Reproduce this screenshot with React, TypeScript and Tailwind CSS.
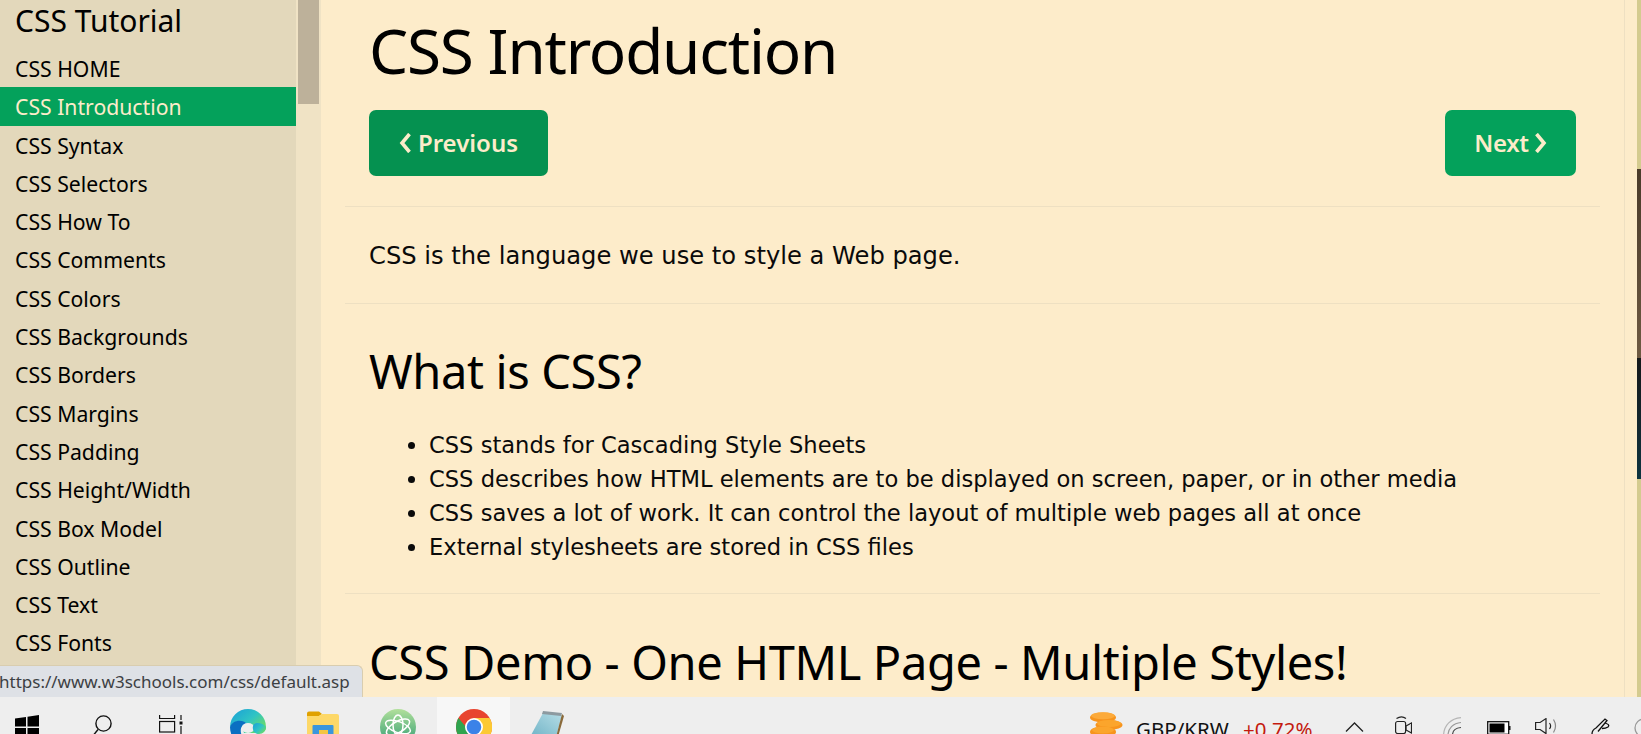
const lessons = [
  'CSS HOME',
  'CSS Introduction',
  'CSS Syntax',
  'CSS Selectors',
  'CSS How To',
  'CSS Comments',
  'CSS Colors',
  'CSS Backgrounds',
  'CSS Borders',
  'CSS Margins',
  'CSS Padding',
  'CSS Height/Width',
  'CSS Box Model',
  'CSS Outline',
  'CSS Text',
  'CSS Fonts',
  'CSS Icons',
];

const bullets = [
  'CSS stands for Cascading Style Sheets',
  'CSS describes how HTML elements are to be displayed on screen, paper, or in other media',
  'CSS saves a lot of work. It can control the layout of multiple web pages all at once',
  'External stylesheets are stored in CSS files',
];

function Sidebar() {
  return (
    <div className="flex w-[321px] shrink-0 overflow-hidden bg-[#f0e3c5]">
      <div className="w-[296px] shrink-0 bg-[#e3d8bb] text-black">
        <h2 className="h-[49px] pl-[15px] text-[30px] leading-[41px]">CSS Tutorial</h2>
        {lessons.map((name) => (
          <div
            key={name}
            className={`h-[38.3px] pl-[15px] pt-[1px] text-[21.2px] leading-[38px] ${
              name === 'CSS Introduction' ? 'bg-[#04a15b] text-[#fcecca]' : ''
            }`}
          >
            {name}
          </div>
        ))}
      </div>
      <div className="ml-[2px] h-[104px] w-[21px] bg-[#bdb19a]" />
    </div>
  );
}

function Rule() {
  return <hr className="border-0 border-t border-[#eee0c2]" />;
}

function Chevron({ left }: { left?: boolean }) {
  return (
    <svg width="13" height="20" viewBox="0 0 13 20" fill="none" stroke="#fcecca" strokeWidth="3.6">
      <path d={left ? 'M10.500 1 3 10l7.500 9' : 'M2.500 1 10 10l-7.500 9'} />
    </svg>
  );
}

function Content() {
  return (
    <div className="flex min-w-0 flex-1 overflow-hidden bg-[#fdecca]">
      <div className="w-[1304px] shrink-0 border-r border-[#eee0c2] px-[24px]">
        <div className="px-[24px]">
          <h1 className="pt-[8px] text-[62px] leading-[85px] tracking-[-1.2px] text-black">CSS Introduction</h1>
          <div className="mt-[17px] flex justify-between">
            <button className="flex h-[66px] w-[179px] items-center justify-center gap-[6px] rounded-[7px] bg-[#059150] text-[24px] font-semibold text-[#fcecca]">
              <Chevron left />
              Previous
            </button>
            <button className="flex h-[66px] w-[131px] items-center justify-center gap-[5px] rounded-[7px] bg-[#04a15b] text-[24px] font-semibold tracking-[-0.3px] text-[#fcecca]">
              Next
              <Chevron />
            </button>
          </div>
        </div>
        <div className="mt-[30px]">
          <Rule />
        </div>
        <p className="px-[24px] pt-[36px] pb-[33px] font-['DejaVu_Sans'] text-[24.2px] leading-[27px] text-[#0a0a0a]">
          CSS is the language we use to style a Web page.
        </p>
        <Rule />
        <h2 className="px-[24px] pt-[35px] text-[47px] leading-[64px] tracking-[-0.37px] text-black">What is CSS?</h2>
        <ul className="mt-[25px] list-disc pl-[84px] font-['DejaVu_Sans'] text-[22.6px] leading-[34px] text-[#0a0a0a]">
          {bullets.map((item) => (
            <li key={item}>{item}</li>
          ))}
        </ul>
        <div className="mt-[29px]">
          <Rule />
        </div>
        <h2 className="whitespace-nowrap px-[24px] pt-[36px] text-[47px] leading-[64px] tracking-[-0.37px] text-black">
          CSS Demo - One HTML Page - Multiple Styles!
        </h2>
      </div>
      <div className="flex-1" />
      <div className="flex w-[4px] shrink-0 flex-col bg-[#d4cb8f]">
        <div className="mt-[169px] h-[189px] bg-gradient-to-b from-[#4a3b2a] to-[#6e5a42]" />
        <div className="h-[121px] bg-gradient-to-b from-[#14181a] to-[#0c3440]" />
      </div>
    </div>
  );
}

function WindowsIcon() {
  return (
    <svg className="ml-[15px] mt-[18px] shrink-0" width="24" height="24" viewBox="0 0 24 24">
      <path d="M0 3.500 11 2v9.500H0zM12.500 1.800 24 0v11.500H12.500zM0 13h11v9.500L0 21zM12.500 13H24v11l-11.500-1.500z" fill="#000" />
    </svg>
  );
}

function SearchIcon() {
  return (
    <svg className="ml-[53px] mt-[18px] shrink-0" width="20" height="24" viewBox="0 0 20 24" fill="none" stroke="#111" strokeWidth="1.400">
      <circle cx="11.500" cy="8.500" r="7.600" />
      <path d="M6 14.500 0 22" />
    </svg>
  );
}

function TaskViewIcon() {
  return (
    <svg className="ml-[47px] mt-[18px] shrink-0" width="24" height="24" viewBox="0 0 24 24" fill="none" stroke="#111" strokeWidth="1.200">
      <path d="M0.600 0v3.500h15V0" />
      <rect x="0.600" y="6.500" width="15" height="10.500" />
      <path d="M22 0v5M22 11v13" />
      <rect x="20.500" y="6.500" width="3" height="3" fill="#111" stroke="none" />
    </svg>
  );
}

function EdgeIcon() {
  return (
    <svg className="ml-[47px] mt-[12px] shrink-0" width="36" height="36" viewBox="0 0 36 36">
      <defs>
        <linearGradient id="edgeTop" x1="0" y1="0" x2="1" y2="0.800">
          <stop offset="0" stopColor="#1a9ed9" />
          <stop offset="0.55" stopColor="#2fc4c4" />
          <stop offset="1" stopColor="#72de5a" />
        </linearGradient>
      </defs>
      <path d="M0 18a18 18 0 0 1 36 0c0 4-3 6-8 6H14C12 14 4 12 0 18z" fill="url(#edgeTop)" />
      <path d="M0 18c3-8 14-8 18-2-6-1-8 3-7 8 1 5 7 10 12 11C10 40 0 30 0 18z" fill="#0b6fc2" />
      <ellipse cx="18" cy="19" rx="6.500" ry="5" fill="#eeeeee" />
      <path d="M23 17c1-4 9-4 13 1 0 4-3 7-7 7-4 0-7-3-6-8z" fill="url(#edgeTop)" />
    </svg>
  );
}

function FolderIcon() {
  return (
    <svg className="ml-[41px] mt-[14px] shrink-0" width="32" height="30" viewBox="0 0 32 30">
      <path d="M0 2.500a2 2 0 0 1 2-2h10l3 2.500-3 2H0z" fill="#e0a100" />
      <path d="M0 5h12l3-2h15a2 2 0 0 1 2 2v25H0z" fill="#fdd868" />
      <rect x="5.500" y="14" width="21" height="16" rx="1" fill="#3a96dd" />
      <rect x="12" y="19" width="9" height="5" fill="#f4c542" />
    </svg>
  );
}

function AtomIcon() {
  return (
    <svg className="ml-[41px] mt-[12px] shrink-0" width="36" height="36" viewBox="0 0 36 36" fill="none">
      <defs>
        <linearGradient id="atomBg" x1="0" y1="0" x2="0" y2="1">
          <stop offset="0" stopColor="#b2e09b" />
          <stop offset="1" stopColor="#2f9c74" />
        </linearGradient>
      </defs>
      <circle cx="18" cy="18" r="18" fill="url(#atomBg)" />
      <g stroke="#fff" strokeWidth="1.500">
        <ellipse cx="18" cy="18" rx="13" ry="5.500" transform="rotate(20 18 18)" />
        <ellipse cx="18" cy="18" rx="13" ry="5.500" transform="rotate(-30 18 18)" />
        <ellipse cx="18" cy="16" rx="5" ry="10" />
      </g>
    </svg>
  );
}

function ChromeIcon() {
  return (
    <svg width="36" height="36" viewBox="0 0 36 36">
      <circle cx="18" cy="18" r="18" fill="#e8442f" />
      <path d="M2.400 9A18 18 0 0 0 16 35.900L26 18 10 18z" fill="#2fa44f" />
      <path d="M33.600 9H18l8 9-10 17.900A18 18 0 0 0 33.600 9z" fill="#fcc934" />
      <circle cx="18" cy="18" r="9" fill="#fff" />
      <circle cx="18" cy="18" r="7.300" fill="#3b82e8" />
    </svg>
  );
}

function NotepadIcon() {
  return (
    <svg className="ml-[20px] mt-[14px] shrink-0" width="36" height="26" viewBox="0 0 36 26">
      <defs>
        <linearGradient id="padBody" x1="0" y1="1" x2="1" y2="0">
          <stop offset="0" stopColor="#6fb3c6" />
          <stop offset="1" stopColor="#b6dde6" />
        </linearGradient>
      </defs>
      <path d="M13 2 32 4 26 26H0z" fill="url(#padBody)" />
      <path d="M13 0 32 2 31 5 12 3z" fill="#8d9aa0" />
      <path d="M32 3 34 5 28 26H26z" fill="#8a6a3a" />
    </svg>
  );
}

function CoinsIcon() {
  return (
    <svg className="ml-[523px] mt-[15px] shrink-0" width="34" height="26" viewBox="0 0 34 26">
      <ellipse cx="14" cy="5.500" rx="13" ry="5" fill="#f7941d" />
      <ellipse cx="14" cy="3.800" rx="12" ry="3.500" fill="#fcaa3a" />
      <ellipse cx="20" cy="13" rx="13.500" ry="5" fill="#f7941d" />
      <ellipse cx="20" cy="11.500" rx="12" ry="3.500" fill="#fba52c" />
      <ellipse cx="14" cy="20" rx="13" ry="5.500" fill="#f7941d" />
      <ellipse cx="14" cy="18" rx="11" ry="3.500" fill="#fba52c" />
    </svg>
  );
}

function TrayIcons() {
  return (
    <>
      <svg className="mt-[25px] shrink-0" width="19" height="10" viewBox="0 0 19 10" fill="none" stroke="#222" strokeWidth="1.300">
        <path d="M1 9.500 9.500 1 18 9.500" />
      </svg>
      <svg className="ml-[31px] mt-[19px] shrink-0" width="17" height="18" viewBox="0 0 17 18" fill="none" stroke="#222" strokeWidth="1.200">
        <path d="M1.500 2.500c3-2 7-2 9.500 0" />
        <rect x="0.600" y="5.500" width="10" height="12" rx="2" />
        <path d="M11 10l5.500-3v10L11 14z" />
      </svg>
      <svg className="ml-[31px] mt-[20px] shrink-0" width="22" height="18" viewBox="0 0 22 18" fill="none" strokeWidth="1.200">
        <path d="M0.600 18C1 8 8 1.500 18 0.600" stroke="#b5b5b5" />
        <path d="M5 18c0-6 5-12 13-12.500" stroke="#999" />
        <path d="M9.500 18c0-4 3-7 8.500-7.500" stroke="#444" />
      </svg>
      <svg className="ml-[22px] mt-[24px] shrink-0" width="24" height="14" viewBox="0 0 24 14">
        <rect x="0.700" y="0.700" width="21" height="12.600" fill="#fff" stroke="#111" strokeWidth="1.300" />
        <rect x="2.500" y="2.500" width="15" height="9" fill="#000" />
        <rect x="22" y="5" width="1.500" height="4" fill="#111" />
      </svg>
      <svg className="ml-[24px] mt-[21px] shrink-0" width="22" height="16" viewBox="0 0 22 16" fill="none" stroke="#222" strokeWidth="1.200">
        <path d="M0.600 4.500h4.500L11 0.600v15L5.100 11.500H0.600z" />
        <path d="M14.500 5c1.500 2 1.500 4 0 6" />
        <path d="M18.500 1.500c2.500 4 2.500 9 0 13" stroke="#888" />
      </svg>
      <svg className="ml-[34px] mt-[21px] shrink-0" width="21" height="16" viewBox="0 0 21 16" fill="none" stroke="#111" strokeWidth="1.300">
        <path d="M1 16c0-3 2-5 4-6l9-9 2 1.500-9 11" />
        <path d="M14 5c3 1 5 2 3 4-1.500 1-4 1.500-6 1.500" />
      </svg>
      <svg className="ml-[22px] mt-[21px] shrink-0" width="10" height="16" viewBox="0 0 10 16" fill="none" stroke="#999" strokeWidth="1.300">
        <circle cx="10" cy="10" r="9" />
      </svg>
    </>
  );
}

function Taskbar() {
  return (
    <div className="flex h-[37px] shrink-0 items-start overflow-hidden bg-[#eeeeee]">
      <WindowsIcon />
      <SearchIcon />
      <TaskViewIcon />
      <EdgeIcon />
      <FolderIcon />
      <AtomIcon />
      <div className="ml-[21px] flex h-[37px] w-[73px] shrink-0 justify-center bg-[#f7f7f7] pt-[12px]">
        <ChromeIcon />
      </div>
      <NotepadIcon />
      <CoinsIcon />
      <span className="ml-[13px] mt-[18px] w-[107px] shrink-0 whitespace-nowrap text-[20.5px] leading-[28px] text-[#111]">GBP/KRW</span>
      <span className="mt-[18px] w-[102px] shrink-0 whitespace-nowrap text-[20.5px] leading-[28px] text-[#c41a0e]">+0.72%</span>
      <TrayIcons />
    </div>
  );
}

export default function App() {
  return (
    <div className="relative flex h-[734px] w-[1641px] flex-col overflow-hidden font-['Noto_Sans',sans-serif]">
      <div className="flex min-h-0 flex-1">
        <Sidebar />
        <Content />
      </div>
      <Taskbar />
      {/* link preview bubble that Chrome shows on hover */}
      <div className="absolute bottom-[37px] left-0 h-[32px] w-[363px] overflow-hidden rounded-tr-[6px] border-t border-r border-[#d9cdaf] bg-[#dee1e6] text-[17px] leading-[31px] text-[#3c4043]">
        <span className="-ml-[1px] block whitespace-nowrap">https://www.w3schools.com/css/default.asp</span>
      </div>
    </div>
  );
}
